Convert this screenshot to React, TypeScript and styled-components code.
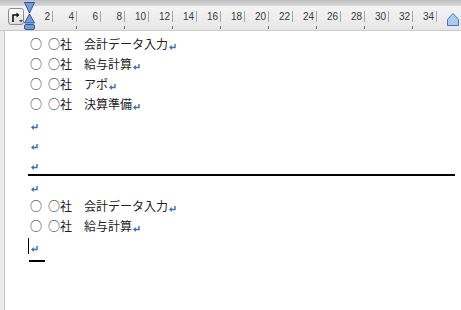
import styled, { createGlobalStyle } from 'styled-components'

const GlobalStyle = createGlobalStyle`
  html, body {
    margin: 0;
    padding: 0;
    background: #ffffff;
    overflow: hidden;
  }
`

const Frame = styled.div`
  width: 461px;
  height: 310px;
  display: flex;
  flex-direction: column;
  background: #ffffff;
`

const TopBand = styled.div`
  height: 6px;
  background: linear-gradient(#bdbdbd, #d9d9d9);
`

const Ruler = styled.div`
  position: relative;
  height: 24px;
  display: flex;
  align-items: stretch;
  background: linear-gradient(#f4f4f4, #e6e6e6);
  border-bottom: 1px solid #c9c9c9;
`

const TabBox = styled.div`
  margin: 2px 0 0 8px;
  width: 16px;
  height: 17px;
  box-sizing: border-box;
  border: 1px solid #8c8c8c;
  border-radius: 3px;
  background: linear-gradient(#ffffff, #dcdcdc);
  display: flex;
  align-items: center;
  justify-content: center;
`

const Scale = styled.div`
  display: flex;
  margin-left: 5px;
`

const Cell = styled.div`
  width: 24px;
  box-sizing: border-box;
  display: flex;
  flex-direction: column;
  padding-top: 5px;
`

const Mark = styled.div`
  height: 11px;
  border-right: 1px solid #a8a8a8;
  padding-right: 2px;
  text-align: right;
  font-family: 'Liberation Sans', Arial, sans-serif;
  font-size: 10px;
  line-height: 11px;
  color: #3a3a3a;
`

const Tick = styled.div<{ $major: boolean }>`
  margin-top: auto;
  margin-bottom: 1px;
  height: 3px;
  border-right: 1px solid ${(p) => (p.$major ? '#6a6a6a' : 'transparent')};
`

const IndentMarker = styled.svg`
  position: absolute;
  left: 24px;
  top: -4px;
`

const RightMarker = styled.svg`
  position: absolute;
  left: 447px;
  top: 7px;
`

const Page = styled.div`
  flex: 1;
  display: flex;
`

const Gutter = styled.div`
  width: 4px;
  background: #ececec;
  border-right: 1px solid #c6c6c6;
`

const Content = styled.div`
  flex: 1;
  padding: 3px 6px 0 25px;
  font-family: 'Noto Sans CJK JP', 'Noto Sans', sans-serif;
  font-size: 12px;
  color: #222222;
`

const Paragraph = styled.div<{ $rule?: boolean }>`
  height: 20px;
  line-height: 20px;
  display: flex;
  align-items: center;
  white-space: pre;
  ${(p) =>
    p.$rule &&
    `
    margin-left: -2px;
    padding-left: 2px;
    border-bottom: 2px solid #000;
  `}
`

const Bullet = styled.span`
  margin-right: 6px;
`

const Task = styled.span`
  margin-left: 12px;
`

const Caret = styled.span`
  width: 1px;
  height: 16px;
  margin-left: -2px;
  margin-right: 1px;
  background: #000;
`

const Return = styled.svg`
  margin: 5px 0 0 1px;
  flex: none;
`

const Underline = styled.div`
  width: 16px;
  height: 2px;
  margin: 4px 0 0 -1px;
  background: #000;
`

const ReturnMark = () => (
  <Return width="7" height="6" viewBox="0 0 7 6">
    <path d="M6 0 V3.5 H1.5" fill="none" stroke="#3a70b8" strokeWidth="1.4" />
    <path d="M0 3.5 L2.8 1.1 V5.9 Z" fill="#3a70b8" />
  </Return>
)

const numbers = Array.from({ length: 17 }, (_, i) => (i + 1) * 2)

const lines: { task?: string; rule?: boolean; caret?: boolean }[] = [
  { task: '会計データ入力' },
  { task: '給与計算' },
  { task: 'アポ' },
  { task: '決算準備' },
  {},
  {},
  { rule: true },
  {},
  { task: '会計データ入力' },
  { task: '給与計算' },
  { caret: true },
]

export default function App() {
  return (
    <Frame>
      <GlobalStyle />
      <TopBand />
      <Ruler>
        <TabBox>
          <svg width="13" height="12" viewBox="0 0 13 12">
            <path d="M3 11 V4 H7" fill="none" stroke="#111" strokeWidth="1.6" />
            <path d="M6.5 1.5 L9.5 4 L6.5 6.5 Z" fill="#111" />
            <path d="M9 9 L13 9 L11 11.5 Z" fill="#444" />
          </svg>
        </TabBox>
        <Scale>
          {numbers.map((n, i) => (
            <Cell key={n}>
              <Mark>{n}</Mark>
              <Tick $major={i % 2 === 1} />
            </Cell>
          ))}
        </Scale>
        <IndentMarker width="11" height="29" viewBox="0 0 11 29">
          <path d="M0.5 0.5 H10.5 L5.5 11 Z" fill="#6d9de0" stroke="#2f5690" strokeWidth="1" />
          <path d="M5.5 12 L10.5 21 H0.5 Z" fill="#6d9de0" stroke="#2f5690" strokeWidth="1" />
          <rect x="0.5" y="22.5" width="10" height="5" rx="1.5" fill="#6d9de0" stroke="#2f5690" strokeWidth="1" />
        </IndentMarker>
        <RightMarker width="12" height="13" viewBox="0 0 12 13">
          <path d="M6 0.5 L11.5 6.5 V12.5 H0.5 V6.5 Z" fill="#a9cbf0" stroke="#4a74a8" strokeWidth="1" />
        </RightMarker>
      </Ruler>
      <Page>
        <Gutter />
        <Content>
          {lines.map((l, i) => (
            <Paragraph key={i} $rule={l.rule}>
              {l.caret && <Caret />}
              {l.task && (
                <>
                  <Bullet>○</Bullet>○社<Task>{l.task}</Task>
                </>
              )}
              <ReturnMark />
            </Paragraph>
          ))}
          <Underline />
        </Content>
      </Page>
    </Frame>
  )
}
